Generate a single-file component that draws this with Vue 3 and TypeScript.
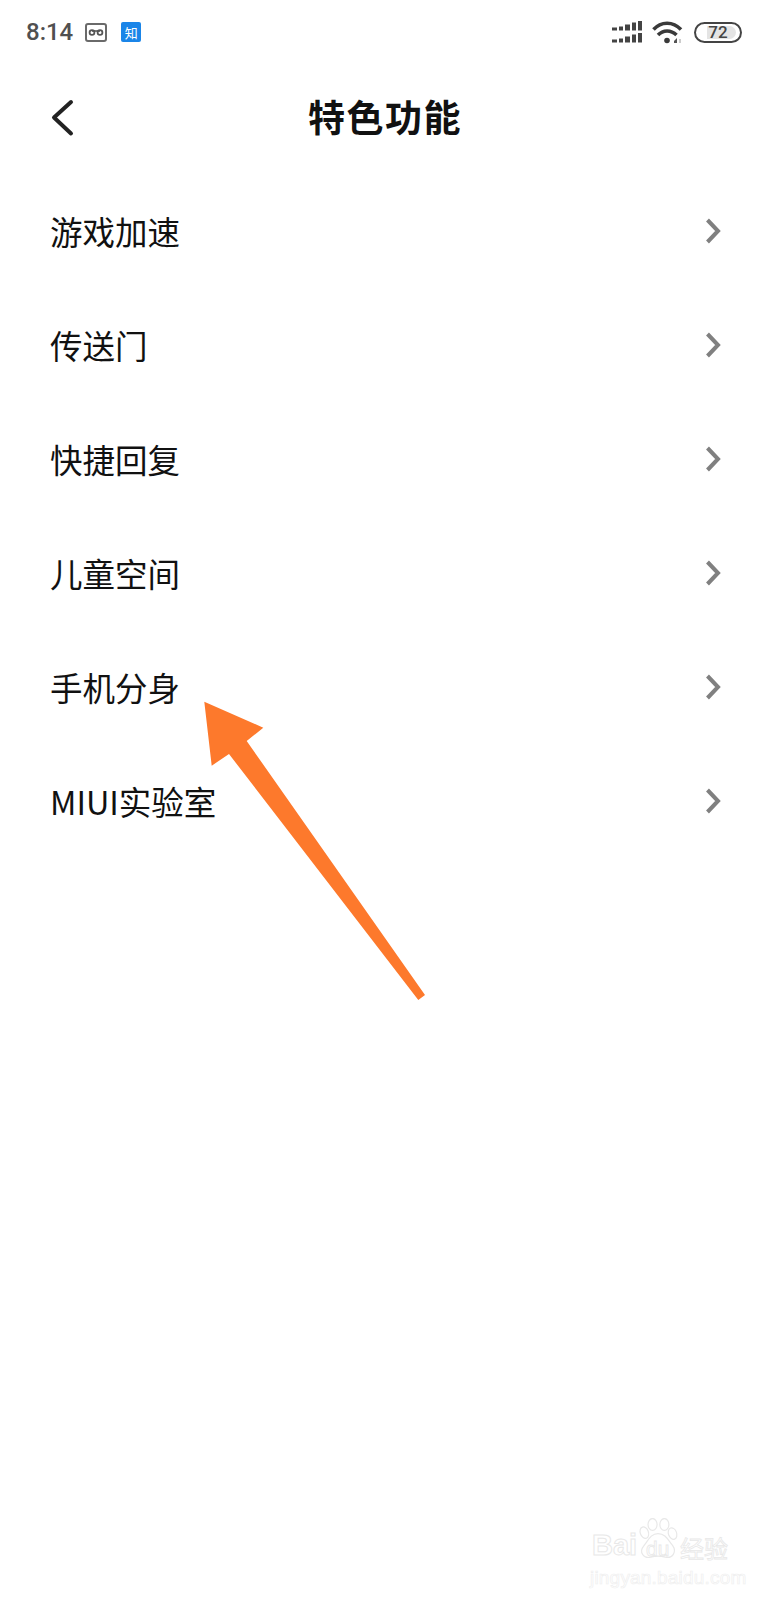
<template>
  <div class="page">
    <div class="status">
      <div class="status-left">
        <span class="time">8:14</span>
        <svg class="vm" width="22" height="19" viewBox="0 0 22 19">
          <rect x="1" y="1" width="20" height="17" rx="2" fill="none" stroke="#6a6a6a" stroke-width="2" />
          <circle cx="7" cy="9.500" r="2.400" fill="none" stroke="#555" stroke-width="1.800" />
          <circle cx="15" cy="9.500" r="2.400" fill="none" stroke="#555" stroke-width="1.800" />
          <path d="M7 8h8" stroke="#555" stroke-width="1.600" />
        </svg>
        <span class="zhi">知</span>
      </div>
      <div class="status-right">
        <svg width="30" height="23" viewBox="0 0 30 23" fill="#444">
          <g v-for="row in [0, 12]" :key="row">
            <rect v-for="(h, i) in signalBars" :key="i" :x="barX[i]" :y="row + 9.500 - h" :width="barW[i]" :height="h" />
          </g>
        </svg>
        <svg class="wifi" width="31" height="24" viewBox="0 0 31 24" fill="none" stroke="#3a3a3a" stroke-width="3.500">
          <path d="M1.500 9.500C9 1 21 1 29 9.500" />
          <path d="M6 15C11 9.500 19 9.500 24.500 15" />
          <circle cx="15" cy="20.500" r="2.800" fill="#3a3a3a" stroke="none" />
          <path d="M25 23v-5l-3 3v2z" fill="#555" stroke="none" />
          <path d="M28 23v-4" stroke="#bbb" stroke-width="1.500" />
        </svg>
        <div class="battery">
          <div class="battery-fill"></div>
          <span class="battery-num">72</span>
        </div>
      </div>
    </div>

    <div class="nav">
      <svg class="back" width="28" height="40" viewBox="0 0 28 40" fill="none" stroke="#222" stroke-width="4" stroke-linecap="round" stroke-linejoin="round">
        <path d="M22 4 5 19.500 22 35.500" />
      </svg>
      <h1 class="title">特色功能</h1>
    </div>

    <ul class="list">
      <li v-for="item in items" :key="item" class="row">
        <span class="label">{{ item }}</span>
        <svg width="16" height="26" viewBox="0 0 16 26" fill="none" stroke="#808080" stroke-width="4" stroke-linejoin="miter">
          <path d="M2.500 2 13 13 2.500 24" />
        </svg>
      </li>
    </ul>

    <svg class="arrow" width="770" height="1600" viewBox="0 0 770 1600">
      <polygon points="204.300,701.700 263.300,727.700 246.700,741 425,995 418.300,1000 229,754 211.700,765.700" fill="#fd792c" />
    </svg>

    <div class="watermark">
      <div class="wm-top">
        <span class="wm-bai">Bai</span>
        <svg class="paw" width="40" height="42" viewBox="0 0 44 46" fill="none" stroke="#e8e8e8" stroke-width="1.300">
          <ellipse cx="7" cy="16" rx="4.500" ry="6.500" transform="rotate(-20 7 16)" />
          <ellipse cx="16" cy="7" rx="5" ry="6.500" />
          <ellipse cx="29" cy="7" rx="5" ry="6.500" />
          <ellipse cx="38" cy="17" rx="4.500" ry="6.500" transform="rotate(-20 38 17)" />
          <path d="M22 17C30 17 33 24 38 30C43 37 38 45 30 43C25 41.500 19 41.500 14 43C6 45 1 37 6 31C11 25 14 17 22 17Z" />
        </svg>
        <span class="wm-du">du</span>
        <span class="wm-jy">经验</span>
      </div>
      <div class="wm-url">jingyan.baidu.com</div>
    </div>
  </div>
</template>

<script setup lang="ts">
const items: string[] = ['游戏加速', '传送门', '快捷回复', '儿童空间', '手机分身', 'MIUI实验室']

// two rows of signal bars in the status bar
const signalBars: number[] = [3, 4, 6, 8, 9.5]
const barX: number[] = [0, 7, 13, 20, 26]
const barW: number[] = [5, 4, 5, 4, 4]
</script>

<style scoped>
.page {
  position: relative;
  width: 770px;
  height: 1600px;
  overflow: hidden;
  background: #fff;
  color: #111;
  font-family: "Noto Sans CJK SC", "Noto Sans", sans-serif;
}

.status {
  display: flex;
  justify-content: space-between;
  align-items: center;
  height: 64px;
  padding: 0 28px 0 26px;
  box-sizing: border-box;
}

.status-left,
.status-right {
  display: flex;
  align-items: center;
}

.time {
  font-family: Roboto, sans-serif;
  font-size: 24px;
  font-weight: 500;
  color: #505050;
}

.vm {
  margin-left: 12px;
}

.zhi {
  display: flex;
  align-items: center;
  justify-content: center;
  width: 20px;
  height: 20px;
  margin-left: 14px;
  border-radius: 2px;
  background: #1a85e8;
  color: #fff;
  font-size: 13px;
  line-height: 1;
}

.wifi {
  margin-left: 10px;
}

.battery {
  position: relative;
  display: flex;
  align-items: center;
  justify-content: center;
  width: 48px;
  height: 21px;
  margin-left: 11px;
  box-sizing: border-box;
  border: 2px solid #444;
  border-radius: 11px;
}

.battery-fill {
  position: absolute;
  left: 11px;
  top: 2px;
  bottom: 2px;
  right: 4px;
  border-radius: 0 7px 7px 0;
  background: #e4e4e4;
}

.battery-num {
  position: relative;
  font-family: Roboto, sans-serif;
  font-size: 17px;
  font-weight: 500;
  color: #444;
}

.nav {
  position: relative;
  display: flex;
  align-items: center;
  justify-content: center;
  height: 104px;
}

.back {
  position: absolute;
  left: 49px;
  top: 34px;
}

.title {
  margin: 0;
  font-size: 37px;
  font-weight: 700;
  line-height: 1;
  letter-spacing: 1.500px;
  color: #111;
}

.list {
  margin: 6px 0 0;
  padding: 0;
  list-style: none;
}

.row {
  display: flex;
  align-items: center;
  justify-content: space-between;
  height: 114px;
  padding: 0 49px 0 50px;
}

.label {
  font-size: 32.500px;
  line-height: 1;
  color: #111;
}

.arrow {
  position: absolute;
  left: 0;
  top: 0;
  pointer-events: none;
}

.watermark {
  position: absolute;
  left: 592px;
  top: 1518px;
  width: 160px;
  color: transparent;
  font-family: "Liberation Sans", sans-serif;
}

.wm-top {
  position: relative;
  display: flex;
  align-items: flex-end;
  height: 42px;
}

.wm-bai {
  width: 46px;
  font-size: 29px;
  font-weight: 700;
  line-height: 1;
  -webkit-text-stroke: 1px #e8e8e8;
}

.wm-du {
  position: absolute;
  left: 54px;
  bottom: 1px;
  font-size: 21px;
  line-height: 1;
  -webkit-text-stroke: 0.8px #e8e8e8;
}

.wm-jy {
  margin-left: 2px;
  font-family: "Noto Sans CJK SC", sans-serif;
  font-size: 24px;
  line-height: 1;
  -webkit-text-stroke: 0.8px #e8e8e8;
}

.wm-url {
  margin-top: 8px;
  margin-left: -2px;
  font-size: 19px;
  line-height: 1;
  letter-spacing: 0.200px;
  -webkit-text-stroke: 0.7px #efefef;
}
</style>
